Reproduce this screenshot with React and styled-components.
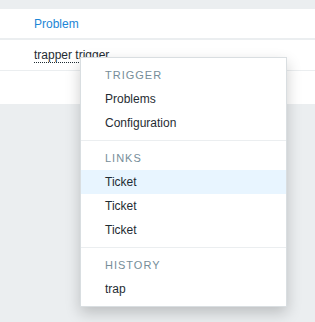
import React from "react";
import styled, { createGlobalStyle } from "styled-components";

const GlobalStyle = createGlobalStyle`
    body {
        margin: 0;
        background: #ebeef0;
        font-family: "Liberation Sans", Arial, sans-serif;
        font-size: 12px;
        color: #1f2c33;
    }
`;

const Page = styled.div`
    position: relative;
    padding-top: 9px;
    height: 322px;
    box-sizing: border-box;
`;

const Table = styled.div`
    background: #ffffff;
`;

const Row = styled.div`
    display: flex;
    align-items: center;
    height: ${props => props.height}px;
    padding-left: 34px;
    border-bottom: ${props => props.border || 0}px solid #ebeef0;
`;

const HeaderLink = styled.span`
    color: #1c86d6;
`;

const Hint = styled.span`
    border-bottom: 1px dotted #1f2c33;
    line-height: 14px;
`;

const Menu = styled.ul`
    position: absolute;
    left: 80px;
    top: 57px;
    width: 207px;
    box-sizing: border-box;
    margin: 0;
    padding: 5px 0;
    list-style: none;
    background: #ffffff;
    border: 1px solid #d9dee1;
    box-shadow: 0 6px 14px rgba(0, 0, 0, 0.2);
`;

const Title = styled.li`
    padding: 0 15px 0 24px;
    line-height: 24px;
    font-size: 11px;
    letter-spacing: 1px;
    text-transform: uppercase;
    color: #768d99;
`;

const Item = styled.li`
    padding: 0 15px 0 24px;
    line-height: 24px;
    background: ${props => (props.active ? "#e8f5ff" : "transparent")};
`;

const Separator = styled.li`
    height: 0;
    margin: 5px 0;
    border-top: 1px solid #ebeef0;
`;

export default function App() {
    return (
        <Page>
            <GlobalStyle />
            <Table>
                <Row height={29} border={2}>
                    <HeaderLink>Problem</HeaderLink>
                </Row>
                <Row height={30} border={1}>
                    <Hint>trapper trigger</Hint>
                </Row>
                <Row height={33} />
            </Table>
            <Menu>
                <Title>Trigger</Title>
                <Item>Problems</Item>
                <Item>Configuration</Item>
                <Separator />
                <Title>Links</Title>
                <Item active>Ticket</Item>
                <Item>Ticket</Item>
                <Item>Ticket</Item>
                <Separator />
                <Title>History</Title>
                <Item>trap</Item>
            </Menu>
        </Page>
    );
}
